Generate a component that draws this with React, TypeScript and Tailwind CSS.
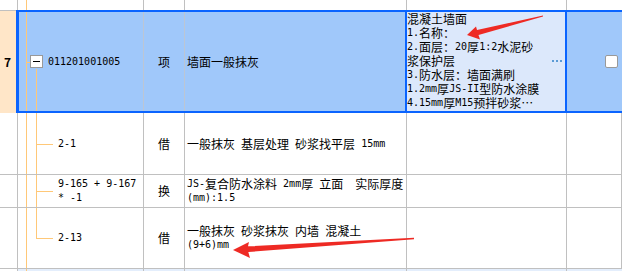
import React from 'react';

const grid = 'grid grid-cols-[18px_126px_41px_222px_160px_1fr]';
const cell = 'border-r border-b border-[#c0c0c0]';
const orange = 'absolute bg-[#ffc878]';

// half-width runs are set in a 6px-wide mono face, like the grid's bitmap font
const Mixed: React.FC<{ text: string }> = ({ text }) => (
    <>
        {text.split(/([\x20-\x7E]+)/).map((part, i) =>
            /^[\x20-\x7E]+$/.test(part) ? (
                <span key={i} className="font-['DejaVu_Sans_Mono',monospace] text-[10px] align-top leading-[14px]">
                    {part}
                </span>
            ) : (
                <span key={i} className="align-top leading-[14px]">{part}</span>
            )
        )}
    </>
);

const Lines: React.FC<{ lines: string[] }> = ({ lines }) => (
    <div>
        {lines.map((l) => (
            <div key={l} className="h-[14px] leading-[14px] whitespace-pre">
                <Mixed text={l} />
            </div>
        ))}
    </div>
);

const ChildRow: React.FC<{
    h: string;
    code: string[];
    kind: string;
    name: string[];
    last?: boolean;
}> = ({ h, code, kind, name, last }) => (
    <div className={`${grid} ${h}`}>
        <div className={`${cell} bg-white`} />
        <div className={`${cell} relative flex items-center pl-[40px]`}>
            <div className={`${orange} left-[8px] top-0 bottom-0 w-px`} />
            <div className={`${orange} left-[18px] top-0 w-px ${last ? 'h-1/2' : 'bottom-0'}`} />
            <div className={`${orange} left-[18px] top-1/2 w-[17px] h-px`} />
            <Lines lines={code} />
        </div>
        <div className={`${cell} flex items-center justify-center`}>{kind}</div>
        <div className={`${cell} flex items-center pl-[2px]`}>
            <Lines lines={name} />
        </div>
        <div className={cell} />
        <div className={cell} />
    </div>
);

const descLines = [
    '混凝土墙面',
    '1.名称：',
    '2.面层：20厚1:2水泥砂',
    '浆保护层',
    '3.防水层：墙面满刷',
    '1.2mm厚JS-II型防水涂膜',
    '4.15mm厚M15预拌砂浆…',
];

export default function App() {
    return (
        <div className="relative w-[622px] h-[271px] overflow-hidden bg-white text-[12px] text-black font-['Noto_Sans_CJK_SC',sans-serif]">
            {/* previous row tail */}
            <div className={`${grid} h-[10px]`}>
                <div className="border-r border-[#c0c0c0]" />
                <div className="relative border-r border-[#c0c0c0]">
                    <div className={`${orange} left-[8px] top-0 bottom-0 w-px`} />
                </div>
                <div className="border-r border-[#c0c0c0]" />
                <div className="border-r border-[#c0c0c0]" />
                <div className="border-r border-[#c0c0c0]" />
                <div />
            </div>

            {/* selected row */}
            <div className="flex h-[103px]">
                <div className="w-[16px] bg-[#ffe6c8] border-t border-[#c0c0c0] flex items-center pl-[4px] font-bold">7</div>
                <div className="flex-1 flex border-l-[3px] border-t-2 border-b-2 border-[#0a64ff] bg-[#a0c8fa]">
                    <div className="relative w-[125px] border-r border-[#bcc6d4] flex items-center pl-[11px]">
                        <div className={`${orange} left-[7px] top-0 bottom-0 w-px`} />
                        <div className={`${orange} left-[8px] top-1/2 w-[3px] h-px`} />
                        <div className={`${orange} left-[17px] top-[calc(50%+7px)] bottom-0 w-px`} />
                        <div className="relative w-[13px] h-[13px] bg-white border border-[#999999] flex items-center justify-center">
                            <div className="w-[7px] h-px bg-black" />
                        </div>
                        <div className="ml-[5px] h-[14px] leading-[14px]">
                            <Mixed text="011201001005" />
                        </div>
                    </div>
                    <div className="w-[41px] border-r border-[#bcc6d4] flex items-center justify-center">项</div>
                    <div className="w-[220px] flex items-center pl-[2px]">墙面一般抹灰</div>
                    <div className="relative w-[162px] border-x-2 border-[#0a64ff] bg-[#dce8fb]">
                        <Lines lines={descLines} />
                        <div className="absolute right-[3px] top-[48px] flex gap-[2px]">
                            <div className="w-[2px] h-[2px] bg-[#5b9bd5]" />
                            <div className="w-[2px] h-[2px] bg-[#5b9bd5]" />
                            <div className="w-[2px] h-[2px] bg-[#5b9bd5]" />
                        </div>
                    </div>
                    <div className="flex-1 flex items-center pl-[38px]">
                        <div className="w-[13px] h-[13px] bg-white border border-[#999999] rounded-[2px]" />
                    </div>
                </div>
            </div>

            <ChildRow h="h-[62px]" code={['2-1']} kind="借" name={['一般抹灰 基层处理 砂浆找平层 15mm']} />
            <ChildRow
                h="h-[33px]"
                code={['9-165 + 9-167', '* -1']}
                kind="换"
                name={['JS-复合防水涂料 2mm厚 立面  实际厚度', '(mm):1.5']}
            />
            <ChildRow
                h="h-[61px]"
                code={['2-13']}
                kind="借"
                name={['一般抹灰 砂浆抹灰 内墙 混凝土', '(9+6)mm']}
                last
            />

            {/* next row */}
            <div className={`${grid} h-[10px]`}>
                <div className="border-r border-[#c0c0c0]" />
                <div className="relative border-r border-[#c0c0c0] bg-[#e4eefc]">
                    <div className={`${orange} left-[8px] top-0 bottom-0 w-px`} />
                </div>
                <div className="border-r border-[#c0c0c0] bg-[#e4eefc]" />
                <div className="border-r border-[#c0c0c0] bg-[#e4eefc]" />
                <div className="border-r border-[#c0c0c0] bg-[#e4eefc]" />
                <div className="bg-[#e4eefc]" />
            </div>

            {/* annotation arrows */}
            <svg className="absolute inset-0 pointer-events-none" width="622" height="271" viewBox="0 0 622 271">
                <polygon
                    fill="#ee2a24"
                    points="467,35 476,26.5 477,30 543,15.4 543,16.6 478.5,35 480,39.5"
                />
                <polygon
                    fill="#ee2a24"
                    points="233,250 249,242 248,246.3 414,237.8 414,239.2 248.3,252 250,258"
                />
            </svg>
        </div>
    );
}
